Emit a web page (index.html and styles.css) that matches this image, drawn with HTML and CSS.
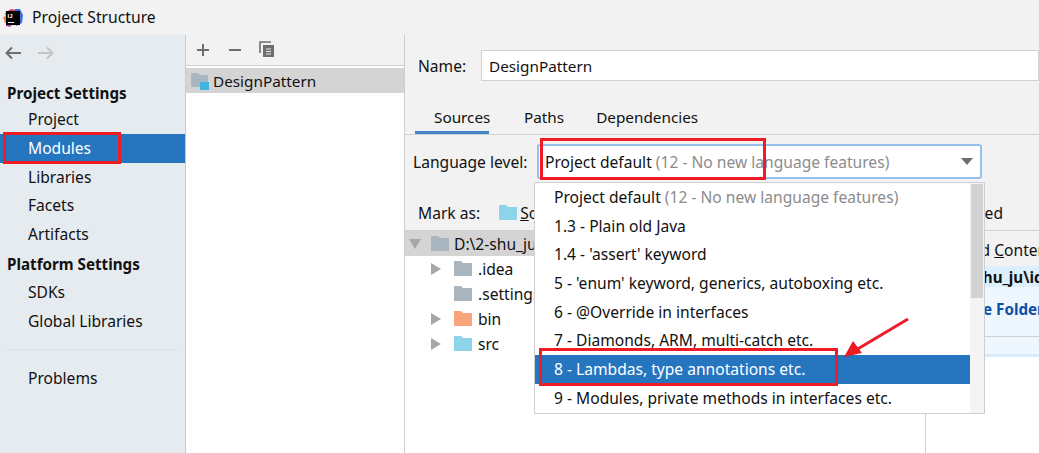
FILE: index.html
```html
<!DOCTYPE html>
<html>
<head>
<meta charset="utf-8">
<title>Project Structure</title>
<link rel="stylesheet" href="styles.css">
</head>
<body>
<div class="window">
  <header class="titlebar">
    <svg class="logo" width="20" height="20" viewBox="0 0 20 20">
      <path d="M2 5 L8 1 L13 2 L9 10 L4 12Z" fill="#f0305a"/>
      <path d="M12 1 L17 1 L20 7 L19 15 L13 18 L10 8Z" fill="#3b6fe0"/>
      <path d="M0 9 L6 7 L6 14 L2 15Z" fill="#f58220"/>
      <path d="M3 14 L9 17 L7 19 L3 18Z" fill="#b83fc0"/>
      <rect x="3" y="3" width="14" height="14" fill="#000"/>
      <text x="4.6" y="9.8" class="logo-text">IJ</text>
      <rect x="5" y="14" width="6" height="1" fill="#fff"/>
    </svg>
    <span class="title">Project Structure</span>
  </header>
  <div class="body">
    <aside class="sidebar">
      <div class="nav-arrows">
        <svg width="18" height="14" viewBox="0 0 18 14"><path d="M17 7H3M8 1.5 2.5 7 8 12.5" fill="none" stroke="#6e6e6e" stroke-width="2"/></svg>
        <svg width="18" height="14" viewBox="0 0 18 14"><path d="M1 7H15M10 1.5 15.5 7 10 12.5" fill="none" stroke="#c4c4c4" stroke-width="2"/></svg>
      </div>
      <div class="group-title first">Project Settings</div>
      <div class="nav-item">Project</div>
      <div class="nav-item active">Modules</div>
      <div class="nav-item">Libraries</div>
      <div class="nav-item">Facets</div>
      <div class="nav-item">Artifacts</div>
      <div class="group-title">Platform Settings</div>
      <div class="nav-item">SDKs</div>
      <div class="nav-item">Global Libraries</div>
      <div class="nav-sep"></div>
      <div class="nav-item">Problems</div>
    </aside>
    <section class="modules">
      <div class="toolbar">
        <svg width="14" height="14" viewBox="0 0 14 14"><path d="M7 1V13M1 7H13" stroke="#6e6e6e" stroke-width="2"/></svg>
        <svg width="14" height="14" viewBox="0 0 14 14"><path d="M1 7H13" stroke="#6e6e6e" stroke-width="2"/></svg>
        <svg class="copy-icon" width="16" height="17" viewBox="0 0 16 17"><path d="M1 12V1H12" fill="none" stroke="#6e6e6e" stroke-width="1.6"/><path d="M4 4H15V16H4Z" fill="#6e6e6e"/><path d="M7 8H12M7 10.5H12M7 13H12" stroke="#e8e8e8" stroke-width="1"/></svg>
      </div>
      <div class="module-row">
        <svg class="module-icon" width="20" height="20" viewBox="0 0 20 20"><path d="M1 2H8L10 4H18V16H1Z" fill="#a9b5bf"/><rect x="10" y="11" width="9" height="8" fill="#40b6e0"/></svg>
        <span>DesignPattern</span>
      </div>
    </section>
    <main class="detail">
      <div class="name-row">
        <label class="name-label">Name:</label>
        <div class="name-input">DesignPattern</div>
      </div>
      <nav class="tabs">
        <span class="tab selected">Sources</span>
        <span class="tab">Paths</span>
        <span class="tab">Dependencies</span>
      </nav>
      <div class="lang-row">
        <span class="lang-label">Language level:</span>
        <div class="combo">
          <span>Project default <span class="muted">(12 - No new language features)</span></span>
          <i class="combo-arrow"></i>
        </div>
      </div>
      <div class="mark-row">
        <span>Mark as:</span>
        <svg class="mark-folder" width="18" height="15" viewBox="0 0 18 15"><path d="M0 0H7L9 2H18V15H0Z" fill="#8dd3ea"/></svg>
        <span class="under">S</span><span>o</span>
        <span class="mark-end">ed</span>
      </div>
      <div class="split">
        <div class="tree">
          <div class="tree-row root">
            <i class="tri down"></i>
            <svg class="folder" width="18" height="15" viewBox="0 0 18 15"><path d="M0 0H7L9 2H18V15H0Z" fill="#a9b5bf"/></svg>
            <span>D:\2-shu_ju</span>
          </div>
          <div class="tree-row"><i class="tri"></i><svg class="folder" width="18" height="15" viewBox="0 0 18 15"><path d="M0 0H7L9 2H18V15H0Z" fill="#a9b5bf"/></svg><span>.idea</span></div>
          <div class="tree-row"><i class="tri none"></i><svg class="folder" width="18" height="15" viewBox="0 0 18 15"><path d="M0 0H7L9 2H18V15H0Z" fill="#a9b5bf"/></svg><span>.settings</span></div>
          <div class="tree-row"><i class="tri"></i><svg class="folder" width="18" height="15" viewBox="0 0 18 15"><path d="M0 0H7L9 2H18V15H0Z" fill="#f9a57c"/></svg><span>bin</span></div>
          <div class="tree-row"><i class="tri"></i><svg class="folder" width="18" height="15" viewBox="0 0 18 15"><path d="M0 0H7L9 2H18V15H0Z" fill="#8dd3ea"/></svg><span>src</span></div>
        </div>
        <div class="roots">
          <div class="roots-add">Add <span class="under">C</span>ontent Root</div>
          <div class="roots-panel">
            <div class="roots-path">D:\2-shu_ju\idea</div>
            <div class="roots-link">Source Folders</div>
            <div class="roots-foot"></div>
          </div>
        </div>
      </div>
    </main>
  </div>

  <div class="popup">
    <div class="popup-list">
      <div class="popup-item">Project default <span class="muted">(12 - No new language features)</span></div>
      <div class="popup-item">1.3 - Plain old Java</div>
      <div class="popup-item">1.4 - 'assert' keyword</div>
      <div class="popup-item">5 - 'enum' keyword, generics, autoboxing etc.</div>
      <div class="popup-item">6 - @Override in interfaces</div>
      <div class="popup-item">7 - Diamonds, ARM, multi-catch etc.</div>
      <div class="popup-item selected">8 - Lambdas, type annotations etc.</div>
      <div class="popup-item">9 - Modules, private methods in interfaces etc.</div>
    </div>
    <div class="scrollbar"><div class="thumb"></div></div>
  </div>

  <div class="mark mark-modules"></div>
  <div class="mark mark-combo"></div>
  <div class="mark mark-item"></div>
  <svg class="arrow" width="80" height="50" viewBox="0 0 80 50">
    <path d="M68 4 L16 35" stroke="#ee1c25" stroke-width="3" fill="none"/>
    <path d="M4 42 L13 26 L22 38Z" fill="#ee1c25"/>
  </svg>
</div>
</body>
</html>
```
FILE: styles.css
```css
* { box-sizing: border-box; }
html, body { margin: 0; padding: 0; }
body {
  font-family: "Noto Sans", "Open Sans", sans-serif;
  font-size: 15.6px;
  color: #111;
  background: #f2f2f2;
  overflow: hidden;
}
.window { position: relative; width: 1039px; height: 453px; overflow: hidden; }

.titlebar { height: 35px; display: flex; align-items: center; padding-left: 3px; background: #f2f2f2; }
.logo { flex: none; }
.logo-text { font: bold 6px "Liberation Sans", sans-serif; fill: #fff; }
.title { margin-left: 9px; font-size: 15.7px; line-height: 35px; }

.body { display: flex; height: 418px; }

.sidebar { width: 186px; flex: none; background: #e6ebf0; border-right: 1px solid #c9c9c9; padding-top: 11px; }
.nav-arrows { display: flex; gap: 15px; padding-left: 4px; height: 14px; }
.group-title { font-weight: 700; font-size: 15.2px; padding-left: 7px; line-height: 30px; height: 29px; }
.group-title.first { margin-top: 17.5px; height: 27.5px; }
.nav-item { padding-left: 28px; height: 28.8px; line-height: 28.6px; }
.nav-item.active { background: #2675bf; color: #fff; }
.nav-sep { height: 1px; margin: 13px 6px 14.4px; background: #dde2e6; }

.modules { width: 219px; flex: none; background: #fff; border-right: 1px solid #cfcfcf; }
.toolbar { height: 31px; background: #f2f2f2; border-bottom: 1px solid #d1d1d1; display: flex; align-items: center; gap: 18px; padding-left: 10px; }
.copy-icon { margin-top: -2px; margin-left: -1px; }
.module-row { margin-top: 2px; height: 25px; background: #d4d4d4; display: flex; align-items: center; gap: 3px; padding-left: 4px; line-height: 24px; font-size: 15.3px; }
.module-icon { flex: none; }

.detail { flex: 1; min-width: 0; display: flex; flex-direction: column; background: #f2f2f2; }
.name-row { display: flex; align-items: center; padding: 15px 0 0 13px; height: 46px; }
.name-label { width: 63px; flex: none; }
.name-input { flex: 1; height: 31px; background: #fff; border: 1px solid #d0d0d0; line-height: 30px; padding-left: 7px; font-size: 15.3px; }

.tabs { margin-top: 20px; height: 34px; border-bottom: 1px solid #d1d1d1; display: flex; padding-left: 10px; gap: 32px; font-size: 15.3px; }
.tab { line-height: 32px; height: 33px; }
.tab.selected { padding-left: 19px; width: 74px; margin-right: 3px; border-bottom: 3px solid #4083c9; }

.lang-row { display: flex; align-items: center; margin-top: 9px; padding-left: 8px; height: 35px; }
.lang-label { width: 124px; flex: none; }
.combo { width: 445px; height: 35px; background: #fff; border: 2px solid #97c0ec; border-radius: 3px; display: flex; align-items: center; justify-content: space-between; padding: 0 7px 0 6px; }
.combo-arrow { width: 0; height: 0; border-left: 6px solid transparent; border-right: 6px solid transparent; border-top: 7px solid #6e6e6e; }
.muted { color: #8c8c8c; }

.mark-row { display: flex; align-items: center; height: 32px; margin-top: 20px; padding: 0 0 4px 13px; border-bottom: 1px solid #d1d1d1; }
.mark-folder { margin: 0 3px 0 19px; flex: none; }
.under { text-decoration: underline; }
.mark-end { margin-left: auto; margin-right: 36px; }

.split { flex: 1; display: flex; min-height: 0; }
.tree { width: 521px; flex: none; background: #fff; border-right: 1px solid #cfcfcf; }
.tree-row { display: flex; align-items: center; height: 25px; padding-left: 26px; }
.tree-row.root { padding-left: 4px; background: #d4d4d4; }
.tree-row.root .folder { margin-right: 5px; }
.tri { width: 10px; height: 12px; flex: none; margin-right: 13px; border-left: 10px solid #a6a6a6; border-top: 6px solid transparent; border-bottom: 6px solid transparent; }
.tri.none { border-color: transparent; }
.tri.down { border: 0; width: 12px; height: 0; margin-right: 10px; border-left: 6px solid transparent; border-right: 6px solid transparent; border-top: 10px solid #a6a6a6; }
.folder { flex: none; margin-right: 6px; }

.roots { flex: 1; background: #fff; min-width: 0; white-space: nowrap; overflow: hidden; }
.roots-add { height: 35px; background: #f2f2f2; padding: 7px 0 0 35px; line-height: 24px; }
.roots-panel { background: #eff7fe; }
.roots-path { background: #dbeffd; font-weight: 700; font-size: 15.2px; height: 21px; line-height: 22px; padding-left: 14px; }
.roots-link { color: #0b4fa8; font-weight: 700; font-size: 15.2px; height: 49px; line-height: 44px; padding-left: 15px; }
.roots-foot { border-top: 1px solid #d1d1d1; border-bottom: 3px solid #d9ecfb; height: 21px; }

.popup { position: absolute; left: 534px; top: 182px; width: 451px; height: 232px; background: #fff; border: 1px solid #cfcfcf; display: flex; }
.popup-list { flex: 1; min-width: 0; }
.popup-item { height: 28.7px; line-height: 28px; padding-left: 19px; white-space: nowrap; }
.popup-item.selected { background: #2675bf; color: #fff; }
.scrollbar { width: 14px; flex: none; background: #f4f4f4; padding: 1px; }
.thumb { height: 114px; background: #d2d2d2; }

.mark { position: absolute; border: 3px solid #ee1c25; pointer-events: none; }
.mark-modules { left: 3px; top: 132px; width: 118px; height: 32px; }
.mark-combo { left: 540px; top: 138px; width: 226px; height: 42px; }
.mark-item { left: 539px; top: 348px; width: 299px; height: 38px; }
.arrow { position: absolute; left: 840px; top: 315px; }
```
